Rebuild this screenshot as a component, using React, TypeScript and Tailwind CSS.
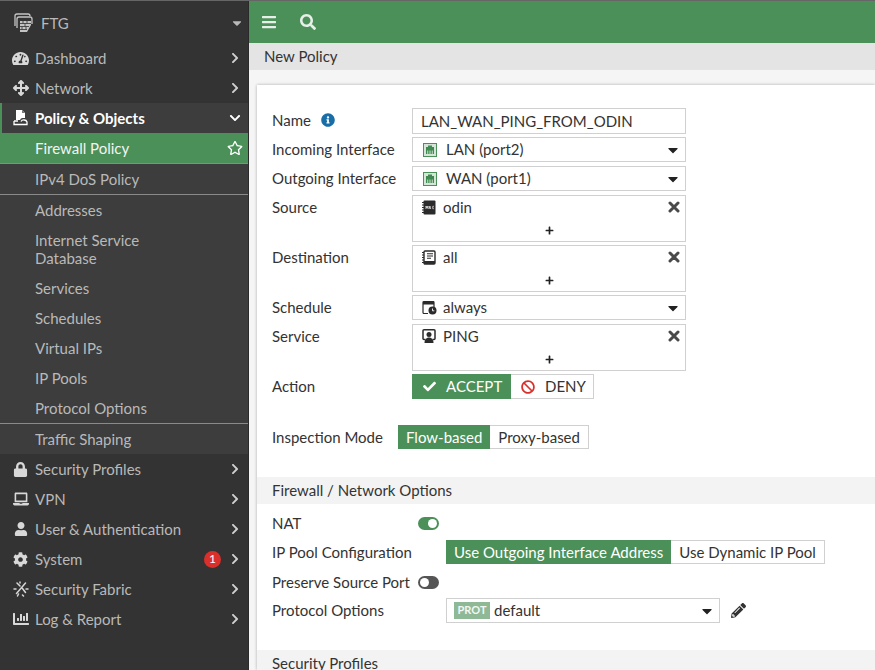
import type { ReactNode } from "react";
import {
  FaBan,
  FaBars,
  FaCaretDown,
  FaChartBar,
  FaCheck,
  FaChevronDown,
  FaChevronRight,
  FaCog,
  FaInfoCircle,
  FaLaptop,
  FaLock,
  FaPencilAlt,
  FaPlus,
  FaRegStar,
  FaSearch,
  FaTachometerAlt,
  FaUser,
} from "react-icons/fa";
import { FaArrowsUpDownLeftRight } from "react-icons/fa6";

function PolicyIcon() {
  return (
    <svg width="15" height="16" viewBox="0 0 15 16">
      <path d="M3 0h6l3 3v5H9.500a3 3 0 0 0-2.500 2H3z" fill="#fff" />
      <path d="M9 0l3 3H9z" fill="#777" />
      <path d="M1 11h4M1 11v3.500h13V12a3 3 0 0 0-3-2 3 3 0 0 0-3 1.500" fill="none" stroke="#fff" strokeWidth="1.300" />
    </svg>
  );
}

function FabricIcon() {
  return (
    <svg width="16" height="16" viewBox="0 0 16 16" stroke="#d8d8d8" strokeWidth="1.500" strokeLinecap="round">
      <path d="M4 2l3 3M9.500 7.500l3 4M12.500 2l-9 10.500M1 8h2M13 8h2M7 1v1M9.500 14l1 1M5.500 13l-1 2" />
    </svg>
  );
}

function FtgLogo() {
  return (
    <svg width="20" height="20" viewBox="0 0 20 20" fill="none" stroke="#c4c4c4" strokeWidth="1.300">
      <path d="M2 13V3a2 2 0 0 1 2-2h11a2 2 0 0 1 2 2" />
      <path d="M4 15V6a2 2 0 0 1 2-2h11a2 2 0 0 1 2 2v5" />
      <path d="M7 8h11v4l-4 7H7z" fill="#c4c4c4" stroke="none" />
      <path d="M7 10.500h11M7 13.500h9M7 16.500h7M10 8v2.500M14 8v2.500M12 10.500v3M9 13.500v3M13 13.500v3" stroke="#333" strokeWidth="0.800" />
    </svg>
  );
}

function PortIcon() {
  return (
    <svg width="14" height="14" viewBox="0 0 14 14" className="shrink-0">
      <rect x="0.500" y="0.500" width="13" height="13" fill="#d5e6d9" stroke="#4a9058" />
      <path d="M5 2.500h4V4h2v7H3V4h2z" fill="#3f8a50" />
      <path d="M4.500 7.500V11M6.200 7.500V11M7.800 7.500V11M9.500 7.500V11" stroke="#d5e6d9" strokeWidth="0.700" />
    </svg>
  );
}

function MacIcon() {
  return (
    <svg width="14" height="15" viewBox="0 0 14 15" className="shrink-0">
      <rect x="1.500" y="0.500" width="12" height="14" rx="1" fill="#2b2b2b" />
      <path d="M0 2.500h2M0 5h2M0 7.500h2M0 10h2M0 12.500h2" stroke="#2b2b2b" />
      <path d="M4 9V6l1 2 1-2v3M7.100 9l.8-3 .8 3M11.800 6.300h-1v2.400h1" fill="none" stroke="#fff" strokeWidth="0.700" />
    </svg>
  );
}

function AddressIcon() {
  return (
    <svg width="14" height="15" viewBox="0 0 14 15" className="shrink-0">
      <rect x="2" y="1" width="11" height="13" rx="1" fill="none" stroke="#2b2b2b" strokeWidth="1.400" />
      <rect x="2" y="11" width="11" height="3" fill="#2b2b2b" />
      <path d="M5 3.800h6M5 6h6M5 8.200h4" stroke="#2b2b2b" strokeWidth="1.100" />
      <path d="M0 2.500h2M0 5h2M0 7.500h2M0 10h2M0 12.500h2" stroke="#2b2b2b" />
    </svg>
  );
}

function ScheduleIcon() {
  return (
    <svg width="15" height="14" viewBox="0 0 15 14" className="shrink-0">
      <path d="M6 12.500H2a1 1 0 0 1-1-1v-10a1 1 0 0 1 1-1h9a1 1 0 0 1 1 1V6" fill="none" stroke="#2b2b2b" strokeWidth="1.200" />
      <rect x="1" y="1" width="11" height="2.500" fill="#2b2b2b" />
      <circle cx="10.500" cy="9.500" r="4" fill="#2b2b2b" />
      <path d="M10.500 7.500v2.300h1.800" fill="none" stroke="#fff" strokeWidth="0.900" />
    </svg>
  );
}

function ServiceIcon() {
  return (
    <svg width="14" height="14" viewBox="0 0 14 14" className="shrink-0">
      <path d="M3.500 10.500H2a1 1 0 0 1-1-1V1.800a1 1 0 0 1 1-1h10a1 1 0 0 1 1 1v7.700a1 1 0 0 1-1 1h-1.500" fill="none" stroke="#2b2b2b" strokeWidth="1.500" />
      <circle cx="7" cy="5.500" r="2.500" fill="#2b2b2b" />
      <path d="M2.500 14c0-4 2.500-5.500 4.500-5.500s4.500 1.500 4.500 5.500z" fill="#2b2b2b" />
    </svg>
  );
}

function RemoveIcon() {
  return (
    <svg width="12" height="12" viewBox="0 0 12 12" className="shrink-0">
      <path d="M2 2l8 8M10 2l-8 8" stroke="#4a4a4a" strokeWidth="3" strokeLinecap="round" />
    </svg>
  );
}

function NavRow({ icon, label, active, badge }: { icon: ReactNode; label: string; active?: boolean; badge?: string }) {
  return (
    <div
      className={
        active
          ? "flex h-[30px] items-center border-l-2 border-[#4a9058] bg-[#3d3d3d] pr-[7px] font-bold text-white"
          : "flex h-[30px] items-center border-l-2 border-transparent pr-[7px] text-[#b9b9b9]"
      }
    >
      <span className={active ? "flex w-[33px] justify-center pl-[4px] text-[#fff]" : "flex w-[33px] justify-center pl-[4px] text-[#d8d8d8]"}>
        {icon}
      </span>
      <span className="flex-1">{label}</span>
      {badge && (
        <span className="mr-[8px] flex h-[17px] w-[17px] items-center justify-center rounded-full bg-[#d9302c] text-[12px] font-normal text-white">
          {badge}
        </span>
      )}
      {active ? <FaChevronDown size={12} className="text-white" /> : <FaChevronRight size={12} className="text-[#d0d0d0]" />}
    </div>
  );
}

function SubRow({ label, tall, divider }: { label: string; tall?: boolean; divider?: boolean }) {
  if (tall) {
    return <div className="w-[170px] py-[6px] pl-[35px] leading-[18px] text-[#b9b9b9]">{label}</div>;
  }
  return (
    <div
      className={
        divider
          ? "flex h-[31px] items-center border-b border-[#8a8a8a] pl-[35px] text-[#b9b9b9]"
          : "flex h-[30px] items-center pl-[35px] text-[#b9b9b9]"
      }
    >
      {label}
    </div>
  );
}

function Label({ children, width = "w-[140px]" }: { children: ReactNode; width?: string }) {
  return <div className={width + " shrink-0 text-[#333]"}>{children}</div>;
}

function SelectBox({ icon, value }: { icon: ReactNode; value: string }) {
  return (
    <div className="flex h-[25px] w-[274px] items-center border border-[#d0d0d0] pl-[10px] pr-[4px]">
      {icon}
      <span className="ml-[9px] flex-1">{value}</span>
      <FaCaretDown size={16} className="text-[#222]" />
    </div>
  );
}

function MultiBox({ icon, value }: { icon: ReactNode; value: string }) {
  return (
    <div className="h-[47px] w-[274px] border border-[#d0d0d0]">
      <div className="flex h-[22px] items-center pl-[9px] pr-[5px]">
        {icon}
        <span className="ml-[7px] flex-1">{value}</span>
        <RemoveIcon />
      </div>
      <div className="mt-[2px] flex h-[20px] items-center justify-center">
        <FaPlus size={9} className="text-[#222]" />
      </div>
    </div>
  );
}

function Section({ title }: { title: string }) {
  return <div className="flex h-[27px] items-center bg-[#f3f3f3] pl-[15px] text-[#333]">{title}</div>;
}

export default function App() {
  return (
    <div className="flex h-[670px] w-[875px] overflow-hidden border-t border-[#666] font-['Lato',sans-serif] text-[15px] text-[#333]">
      <aside className="w-[249px] shrink-0 border-r border-[#2a2a2a] bg-[#333]">
        <div className="flex h-[42px] items-center pl-[13px] pr-[4px] pt-[2px] text-[#b9b9b9]">
          <FtgLogo />
          <span className="ml-[8px] flex-1">FTG</span>
          <FaCaretDown size={14} />
        </div>
        <NavRow icon={<FaTachometerAlt size={17} />} label="Dashboard" />
        <NavRow icon={<FaArrowsUpDownLeftRight size={16} />} label="Network" />
        <NavRow icon={<PolicyIcon />} label="Policy & Objects" active />
        <div className="flex h-[30px] items-center justify-between bg-[#4a9058] pl-[35px] pr-[5px] text-[#f4f4f4]">
          Firewall Policy
          <FaRegStar size={16} className="text-white" />
        </div>
        <div className="bg-[#3d3d3d]">
          <div className="flex h-[32px] items-center border-t border-b border-[#8a8a8a] pl-[35px] text-[#b9b9b9]">IPv4 DoS Policy</div>
          <SubRow label="Addresses" />
          <SubRow label="Internet Service Database" tall />
          <SubRow label="Services" />
          <SubRow label="Schedules" />
          <SubRow label="Virtual IPs" />
          <SubRow label="IP Pools" />
          <SubRow label="Protocol Options" divider />
          <SubRow label="Traffic Shaping" />
        </div>
        <NavRow icon={<FaLock size={15} />} label="Security Profiles" />
        <NavRow icon={<FaLaptop size={16} />} label="VPN" />
        <NavRow icon={<FaUser size={14} />} label="User & Authentication" />
        <NavRow icon={<FaCog size={15} />} label="System" badge="1" />
        <NavRow icon={<FabricIcon />} label="Security Fabric" />
        <NavRow icon={<FaChartBar size={16} />} label="Log & Report" />
      </aside>

      <main className="flex min-w-0 flex-1 flex-col bg-[#f5f5f5]">
        <div className="flex h-[42px] shrink-0 items-center bg-[#4a9058] pl-[12px] text-[#e6f0e8]">
          <FaBars size={16} />
          <FaSearch size={16} className="ml-[23px]" />
        </div>
        <div className="flex h-[27px] shrink-0 items-center bg-[#e4e4e4] pl-[15px]">New Policy</div>

        <div className="ml-[8px] mt-[15px] flex-1 overflow-hidden bg-white pt-[23px] shadow-[0_0_3px_rgba(0,0,0,0.3)]">
          <div className="flex flex-col pl-[15px]">
            <div className="flex h-[26px] items-center">
              <Label>
                <span className="flex items-center pb-[2px]">
                  Name
                  <FaInfoCircle size={14} className="ml-[10px] text-[#1a6ea8]" />
                </span>
              </Label>
              <div className="flex h-[26px] w-[274px] items-center border border-[#d0d0d0] pl-[8px]">LAN_WAN_PING_FROM_ODIN</div>
            </div>
            <div className="mt-[3px] flex items-center">
              <Label>Incoming Interface</Label>
              <SelectBox icon={<PortIcon />} value="LAN (port2)" />
            </div>
            <div className="mt-[4px] flex items-center">
              <Label>Outgoing Interface</Label>
              <SelectBox icon={<PortIcon />} value="WAN (port1)" />
            </div>
            <div className="mt-[4px] flex">
              <Label><div className="mt-[1px]">Source</div></Label>
              <MultiBox icon={<MacIcon />} value="odin" />
            </div>
            <div className="mt-[3px] flex">
              <Label><div className="mt-[1px]">Destination</div></Label>
              <MultiBox icon={<AddressIcon />} value="all" />
            </div>
            <div className="mt-[3px] flex items-center">
              <Label>Schedule</Label>
              <div className="flex h-[25px] w-[274px] items-center border border-[#d0d0d0] pl-[9px] pr-[4px]">
                <ScheduleIcon />
                <span className="ml-[6px] flex-1">always</span>
                <FaCaretDown size={16} className="text-[#222]" />
              </div>
            </div>
            <div className="mt-[4px] flex">
              <Label><div className="mt-[1px]">Service</div></Label>
              <MultiBox icon={<ServiceIcon />} value="PING" />
            </div>
            <div className="mt-[3px] flex items-center">
              <Label>Action</Label>
              <div className="flex h-[25px] items-center">
                <div className="flex h-full w-[99px] items-center bg-[#4a9058] pl-[11px] text-white">
                  <FaCheck size={13} />
                  <span className="ml-[10px]">ACCEPT</span>
                </div>
                <div className="flex h-full w-[83px] items-center border border-l-0 border-[#d0d0d0] pl-[10px]">
                  <FaBan size={14} className="text-[#d9302c]" />
                  <span className="ml-[10px]">DENY</span>
                </div>
              </div>
            </div>
            <div className="mt-[26px] flex h-[24px] items-center">
              <Label width="w-[126px]">Inspection Mode</Label>
              <div className="flex h-full">
                <div className="flex items-center bg-[#4a9058] px-[8px] text-white">Flow-based</div>
                <div className="flex items-center border border-l-0 border-[#d0d0d0] px-[8px]">Proxy-based</div>
              </div>
            </div>
          </div>

          <div className="mt-[28px]">
            <Section title="Firewall / Network Options" />
          </div>
          <div className="flex flex-col pl-[15px]">
            <div className="mt-[7px] flex h-[24px] items-center">
              <Label width="w-[146px]">NAT</Label>
              <div className="flex h-[13px] w-[21px] justify-end rounded-full bg-[#4a9058] p-[2px]">
                <div className="h-[9px] w-[9px] rounded-full bg-white" />
              </div>
            </div>
            <div className="mt-[5px] flex h-[24px] items-center">
              <Label width="w-[174px]">IP Pool Configuration</Label>
              <div className="flex h-full">
                <div className="flex items-center bg-[#4a9058] px-[8px] text-white">Use Outgoing Interface Address</div>
                <div className="flex items-center border border-l-0 border-[#d0d0d0] px-[8px]">Use Dynamic IP Pool</div>
              </div>
            </div>
            <div className="mt-[6px] flex h-[24px] items-center">
              <Label width="w-[146px]">Preserve Source Port</Label>
              <div className="flex h-[13px] w-[21px] justify-start rounded-full bg-[#555] p-[2px]">
                <div className="h-[9px] w-[9px] rounded-full bg-white" />
              </div>
            </div>
            <div className="mt-[4px] flex items-center">
              <Label width="w-[174px]"><div className="-mt-[1px]">Protocol Options</div></Label>
              <div className="flex h-[25px] w-[274px] items-center border border-[#d0d0d0] pl-[7px] pr-[4px]">
                <span className="flex h-[17px] w-[36px] items-center justify-center bg-[#8fb996] text-[11px] font-bold text-[#f2f7f3]">PROT</span>
                <span className="ml-[4px] flex-1">default</span>
                <FaCaretDown size={16} className="text-[#222]" />
              </div>
              <FaPencilAlt size={15} className="ml-[11px] text-[#333]" />
            </div>
          </div>
          <div className="mt-[27px]">
            <Section title="Security Profiles" />
          </div>
        </div>
      </main>
    </div>
  );
}
